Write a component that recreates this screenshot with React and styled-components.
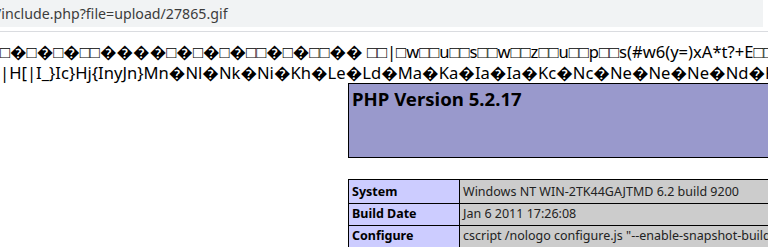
import styled, { createGlobalStyle } from "styled-components";

const GlobalStyle = createGlobalStyle`
  html, body {
    margin: 0;
    padding: 0;
    background: #fff;
    overflow: hidden;
  }
`;

const line1 =
  "\u25a1\ufffd\u25a1\ufffd\u25a1\ufffd\u25a1\u25a1\ufffd\ufffd\ufffd\ufffd\u25a1\ufffd\u25a1\ufffd\u25a1\ufffd\u25a1\u25a1\ufffd\u25a1\ufffd\u25a1\u25a1\ufffd\ufffd \u25a1\u25a1|\u25a1w\u25a1\u25a1u\u25a1\u25a1s\u25a1\u25a1w\u25a1\u25a1z\u25a1\u25a1u\u25a1\u25a1p\u25a1\u25a1s(#w6(y=)xA*t?+E\u25a1\u25a1";
const line2 =
  "|H[|I_}Ic}Hj{InyJn}Mn\ufffdNl\ufffdNk\ufffdNi\ufffdKh\ufffdLe\ufffdLd\ufffdMa\ufffdKa\ufffdIa\ufffdIa\ufffdKc\ufffdNc\ufffdNe\ufffdNe\ufffdNe\ufffdNd\ufffdKc\ufffdIb\ufffdJb";

const rows = [
  { name: "System", value: "Windows NT WIN-2TK44GAJTMD 6.2 build 9200", first: true },
  { name: "Build Date", value: "Jan 6 2011 17:26:08" },
  { name: "Configure", value: 'cscript /nologo configure.js "--enable-snapshot-build" "--enable-debug-pack"' },
];

export default function App() {
  return (
    <>
      <GlobalStyle />
      <AddressBar>
        <Url>/include.php?file=upload/27865.gif</Url>
      </AddressBar>
      <Divider />
      <Page>
        <Garbage>{line1}</Garbage>
        <Garbage>{line2}</Garbage>
        <Center>
          <HeaderTable>
            <Title>PHP Version 5.2.17</Title>
          </HeaderTable>
          <InfoTable>
            <tbody>
              {rows.map((r) => (
                <tr key={r.name}>
                  <KeyCell $first={r.first}>{r.name}</KeyCell>
                  <ValueCell $first={r.first}>{r.value}</ValueCell>
                </tr>
              ))}
            </tbody>
          </InfoTable>
        </Center>
      </Page>
    </>
  );
}

const AddressBar = styled.div`
  width: 763px;
  height: 27px;
  background: #f1f3f4;
  overflow: hidden;
  font-family: "Noto Sans", sans-serif;
  font-size: 14.2px;
  line-height: 27px;
  color: #3c3c3c;
  white-space: nowrap;
`;

const Url = styled.span`
  margin-left: -4px;
`;

const Divider = styled.div`
  margin-top: 4px;
  height: 1px;
  background: #dadce0;
`;

const Page = styled.div`
  padding-top: 9px;
  font-family: "Noto Sans", sans-serif;
  color: #000;
`;

const Garbage = styled.div`
  font-size: 16.6px;
  line-height: 21px;
  white-space: nowrap;
  overflow: hidden;
`;

const Center = styled.div`
  width: 1296px;
`;

const HeaderTable = styled.div`
  width: 600px;
  height: 75px;
  margin: 0 auto;
  padding: 3px;
  box-sizing: border-box;
  border: 1px solid #000;
  background: #9999cc;
`;

const Title = styled.h1`
  margin: 0;
  font-size: 18.6px;
  line-height: 24px;
  font-weight: bold;
`;

const InfoTable = styled.table`
  width: 600px;
  margin: 21px auto 0;
  border-collapse: collapse;
  table-layout: fixed;
  font-size: 12.5px;
  line-height: 16px;
`;

const KeyCell = styled.td`
  width: 104px;
  border: 1px solid #000;
  background: #ccccff;
  font-weight: bold;
  padding: ${(p) => (p.$first ? "4px 3px 3px" : "2px 3px 3px")};
  white-space: nowrap;
  overflow: hidden;
`;

const ValueCell = styled.td`
  border: 1px solid #000;
  background: #cccccc;
  color: #222;
  padding: ${(p) => (p.$first ? "4px 3px 3px" : "2px 3px 3px")};
  white-space: nowrap;
  overflow: hidden;
`;
